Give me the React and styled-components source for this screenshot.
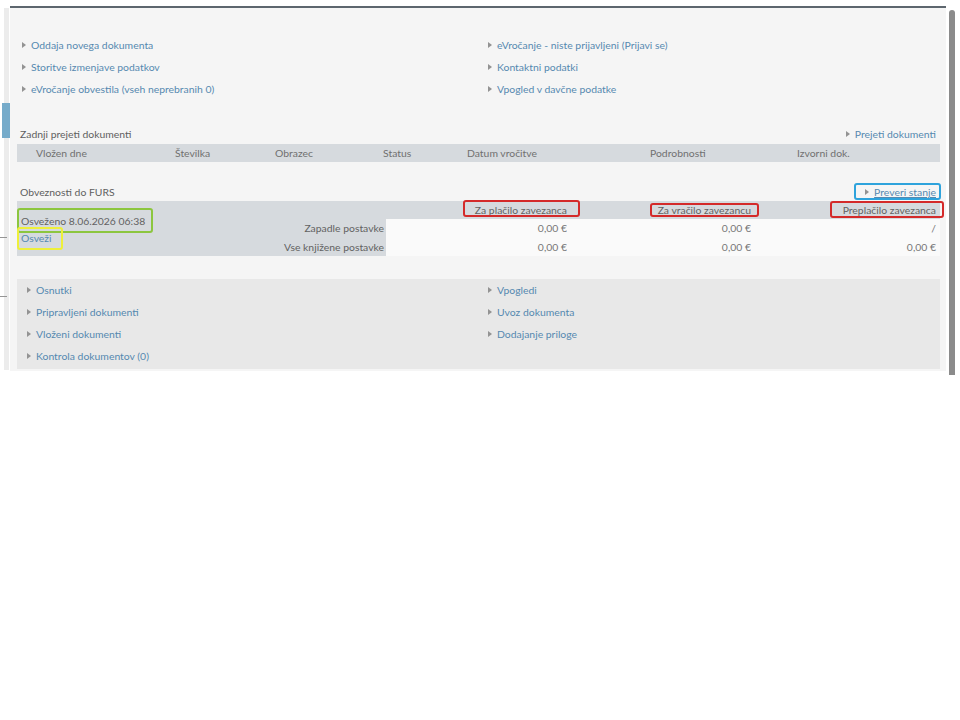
import React from "react";
import styled, { createGlobalStyle } from "styled-components";

const Global = createGlobalStyle`
  html, body { margin: 0; padding: 0; background: #ffffff; }
  body { font-family: Lato, "Open Sans", Arial, sans-serif; font-size: 10.4px; color: #646464; }
  * { box-sizing: border-box; }
`;

const Page = styled.div`
  display: flex;
  align-items: flex-start;
  padding-top: 6px;
  width: 960px;
`;

const LeftRail = styled.div`
  position: relative;
  width: 10px;
  height: 362px;
  margin-top: 2px;
  display: flex;
  justify-content: flex-end;
`;

const RailBand = styled.div`
  width: 5px;
  height: 100%;
  margin-right: 1px;
  background: #ececec;
  display: flex;
  flex-direction: column;
`;

const RailBlue = styled.div`
  margin-top: 95px;
  margin-left: -2px;
  width: 8px;
  height: 35px;
  background: #76abca;
`;

const RailDash = styled.div`
  position: absolute;
  left: 0;
  top: ${(p) => p.$top}px;
  width: 7px;
  height: 1px;
  background: #959595;
`;

const Panel = styled.div`
  width: 936px;
  border-top: 2px solid #5d666e;
  background: #f5f5f5;
  padding: 26px 6px 2px 7px;
  display: flex;
  flex-direction: column;
`;

const Scrollbar = styled.div`
  margin-top: 4px;
  margin-left: 3px;
  width: 6px;
  height: 365px;
  background: #8b8b8b;
  border-radius: 3px 3px 0 0;
`;

const LinkGrid = styled.div`
  display: grid;
  grid-template-columns: ${(p) => p.$cols};
  grid-auto-rows: 22px;
  padding-left: ${(p) => p.$pad}px;
`;

const LinkItem = styled.a`
  display: flex;
  align-items: center;
  gap: 5px;
  color: #5589b0;
  text-decoration: none;
  white-space: nowrap;
  line-height: 16px;
`;

const Tri = styled.span`
  display: inline-block;
  width: 0;
  height: 0;
  border-left: 4px solid #939393;
  border-top: 3px solid transparent;
  border-bottom: 3px solid transparent;
  flex: none;
`;

const SectionHead = styled.div`
  display: flex;
  justify-content: space-between;
  align-items: center;
  height: 16px;
  line-height: 16px;
  padding: 0 4px 0 3px;
  margin-top: ${(p) => p.$mt}px;
  margin-bottom: ${(p) => p.$mb}px;
  color: #5f5f5f;
`;

const Underlined = styled.span`
  text-decoration: underline;
`;

const Marked = styled.span`
  position: relative;
  display: inline-flex;
  align-items: center;
  gap: 5px;
  &::after {
    content: "";
    position: absolute;
    top: ${(p) => p.$t}px;
    bottom: ${(p) => p.$b}px;
    left: ${(p) => p.$l}px;
    right: ${(p) => p.$r}px;
    border: 2px solid ${(p) => p.$c};
    border-radius: 3px;
    pointer-events: none;
  }
`;

const TableHeader = styled.div`
  display: grid;
  grid-template-columns: 158px 100px 108px 84px 183px 147px 1fr;
  height: 18px;
  align-items: center;
  background: #d6dade;
  color: #707070;
`;

const HeadCell = styled.div`
  padding-left: ${(p) => p.$pl || 0}px;
  white-space: nowrap;
`;

const Furs = styled.div`
  display: grid;
  grid-template-columns: 223px 146px 181px 184px 1fr;
  grid-template-rows: 18px 18px 19px;
  background: #d6dade;
  color: #626262;
`;

const StampCell = styled.div`
  grid-row: 1 / span 3;
  grid-column: 1;
  display: flex;
  flex-direction: column;
  justify-content: center;
  padding-left: 4px;
  line-height: 17px;
  padding-top: 2px;
`;

const RefreshLink = styled.a`
  color: #5589b0;
  text-decoration: none;
`;

const FursCell = styled.div`
  display: flex;
  align-items: center;
  justify-content: flex-end;
  padding-right: ${(p) => p.$pr || 0}px;
  background: ${(p) => (p.$value ? "#fafafa" : "transparent")};
  white-space: nowrap;
  color: ${(p) => (p.$value ? "#767676" : "#626262")};
`;

const BottomBox = styled.div`
  margin-top: 23px;
  background: #e8e8e8;
  padding: 0 0 2px 10px;
`;

const Link = ({ children }) => (
  <LinkItem href="#">
    <Tri />
    {children}
  </LinkItem>
);

export default function App() {
  return (
    <>
      <Global />
      <Page>
        <LeftRail>
          <RailBand>
            <RailBlue />
          </RailBand>
          <RailDash $top={229} />
          <RailDash $top={288} />
        </LeftRail>
        <Panel>
          <LinkGrid $cols="466px 1fr" $pad={5}>
            <Link>Oddaja novega dokumenta</Link>
            <Link>eVročanje - niste prijavljeni (Prijavi se)</Link>
            <Link>Storitve izmenjave podatkov</Link>
            <Link>Kontaktni podatki</Link>
            <Link>eVročanje obvestila (vseh neprebranih 0)</Link>
            <Link>Vpogled v davčne podatke</Link>
          </LinkGrid>

          <SectionHead $mt={26} $mb={2}>
            <span>Zadnji prejeti dokumenti</span>
            <Link>Prejeti dokumenti</Link>
          </SectionHead>
          <TableHeader>
            <HeadCell $pl={19}>Vložen dne</HeadCell>
            <HeadCell>Številka</HeadCell>
            <HeadCell>Obrazec</HeadCell>
            <HeadCell>Status</HeadCell>
            <HeadCell>Datum vročitve</HeadCell>
            <HeadCell>Podrobnosti</HeadCell>
            <HeadCell>Izvorni dok.</HeadCell>
          </TableHeader>

          <SectionHead $mt={22} $mb={1}>
            <span>Obveznosti do FURS</span>
            <Marked $c="#2ea3dc" $t={-1} $b={0} $l={-11} $r={-5}>
              <LinkItem href="#">
                <Tri />
                <Underlined>Preveri stanje</Underlined>
              </LinkItem>
            </Marked>
          </SectionHead>
          <Furs>
            <StampCell>
              <span>
                <Marked $c="#8cc63f" $t={-5} $b={-3} $l={-4} $r={-8}>
                  Osveženo 8.06.2026 06:38
                </Marked>
              </span>
              <span>
                <Marked $c="#eef03a" $t={-3} $b={-3} $l={-4} $r={-11}>
                  <RefreshLink href="#">Osveži</RefreshLink>
                </Marked>
              </span>
            </StampCell>
            <FursCell />
            <FursCell>
              <Marked $c="#d42a2a" $t={-4} $b={-1} $l={-12} $r={-13}>
                Za plačilo zavezanca
              </Marked>
            </FursCell>
            <FursCell>
              <Marked $c="#d42a2a" $t={-1} $b={-1} $l={-8} $r={-8}>
                Za vračilo zavezancu
              </Marked>
            </FursCell>
            <FursCell $pr={4}>
              <Marked $c="#d42a2a" $t={-3} $b={-2} $l={-13} $r={-8}>
                Preplačilo zavezanca
              </Marked>
            </FursCell>

            <FursCell $pr={2}>Zapadle postavke</FursCell>
            <FursCell $value>0,00 €</FursCell>
            <FursCell $value>0,00 €</FursCell>
            <FursCell $value $pr={4}>/</FursCell>

            <FursCell $pr={2}>Vse knjižene postavke</FursCell>
            <FursCell $value>0,00 €</FursCell>
            <FursCell $value>0,00 €</FursCell>
            <FursCell $value $pr={4}>0,00 €</FursCell>
          </Furs>

          <BottomBox>
            <LinkGrid $cols="461px 1fr" $pad={0}>
              <Link>Osnutki</Link>
              <Link>Vpogledi</Link>
              <Link>Pripravljeni dokumenti</Link>
              <Link>Uvoz dokumenta</Link>
              <Link>Vloženi dokumenti</Link>
              <Link>Dodajanje priloge</Link>
              <Link>Kontrola dokumentov (0)</Link>
            </LinkGrid>
          </BottomBox>
        </Panel>
        <Scrollbar />
      </Page>
    </>
  );
}
